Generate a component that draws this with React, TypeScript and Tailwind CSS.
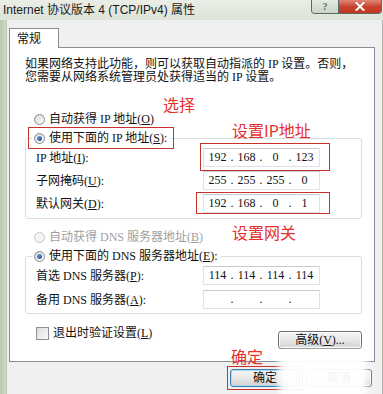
import React from "react";

const uiFont = { fontFamily: '"Liberation Serif", "Noto Sans CJK SC", serif' };

function Radio({ checked, disabled }: { checked?: boolean; disabled?: boolean }) {
  return (
    <span
      className={`relative flex h-[11px] w-[11px] flex-none items-center justify-center rounded-full border ${
        disabled ? "border-[#c4c4c4] bg-[#f4f4f4]" : "border-[#8a8a8a] bg-gradient-to-br from-[#d8d8d8] to-[#ffffff]"
      }`}
    >
      {checked && <span className="h-[5px] w-[5px] rounded-full bg-gradient-to-br from-[#6fa6e0] to-[#1c4f8e]" />}
    </span>
  );
}

function RadioRow({
  checked,
  disabled,
  children,
  boxed,
}: {
  checked?: boolean;
  disabled?: boolean;
  children: React.ReactNode;
  boxed?: boolean;
}) {
  return (
    <div className="relative z-10 flex h-[14px] pl-[22px]">
      <div
        className={`flex items-center gap-[4px] bg-white pl-[2px] pr-[3px] ${disabled ? "text-[#a0a0a0]" : "text-[#111]"} ${
          boxed ? "outline outline-1 outline-[#c8322d] outline-offset-[3px]" : ""
        }`}
      >
        <Radio checked={checked} disabled={disabled} />
        <span className="leading-[14px]">{children}</span>
      </div>
    </div>
  );
}

function IpField({ parts }: { parts: string[] }) {
  return (
    <div className="flex h-[19px] w-[117px] items-center border border-[#dfe3e8] border-t-[#c6cbd2] bg-white pl-[1px] text-[12px] text-[#111]">
      {parts.map((p, i) => (
        <React.Fragment key={i}>
          <span className="w-[25px] text-center leading-[17px]">{p}</span>
          {i < 3 && <span className="w-[4px] text-center leading-[17px]">.</span>}
        </React.Fragment>
      ))}
    </div>
  );
}

function FieldRow({ label, parts }: { label: React.ReactNode; parts: string[] }) {
  return (
    <div className="flex h-[19px] items-center">
      <span className="w-[167px] leading-[14px]">{label}</span>
      <IpField parts={parts} />
    </div>
  );
}

function WinButton({ children, primary }: { children: React.ReactNode; primary?: boolean }) {
  return (
    <div
      className={`flex h-[18px] items-center justify-center rounded-[3px] border bg-gradient-to-b from-[#f4f4f4] via-[#e8e8e8] to-[#d2d2d2] text-[12px] text-[#111] ${
        primary ? "border-[#3c7fb1] shadow-[inset_0_0_0_1px_#a8dcf4]" : "border-[#707070] shadow-[inset_0_0_0_1px_#fcfcfc]"
      }`}
    >
      {children}
    </div>
  );
}

export default function App() {
  return (
    <div className="relative h-[394px] w-[383px] overflow-hidden bg-[#dfe7da]" style={uiFont}>
      {/* title bar */}
      <div className="flex h-[20px] items-start bg-gradient-to-b from-[#eaeee6] to-[#dde4d8]">
        <span
          className="pl-[3px] pt-[2px] text-[12px] leading-[16px] text-[#1a1a1a]"
          style={{ fontFamily: '"Liberation Sans", "Noto Sans CJK SC", sans-serif' }}
        >
          Internet 协议版本 4 (TCP/IPv4) 属性
        </span>
        <div className="ml-auto mr-[1px] flex h-[14px] overflow-hidden rounded-b-[4px] border border-t-0 border-[#5c6a63]">
          <div className="flex w-[26px] items-center justify-center bg-gradient-to-b from-[#e4ebe2] to-[#c9d6c6] text-[10px] font-bold leading-none text-[#5a6b66]">
            ?
          </div>
          <div className="flex w-[43px] items-center justify-center border-l border-[#5c6a63] bg-gradient-to-b from-[#e0867a] via-[#c8432f] to-[#c2371f]">
            <svg width="10" height="9" viewBox="0 0 10 9">
              <path d="M1.5 1 L8.5 8 M8.5 1 L1.5 8" stroke="#fff" strokeWidth="2" strokeLinecap="square" />
            </svg>
          </div>
        </div>
      </div>

      {/* body */}
      <div className="flex h-[374px]">
        <div className="w-[7px] flex-none border-r border-[#b9c6b2] bg-gradient-to-r from-[#b7c8ad] to-[#cfdac9]" />
        <div className="flex-1 bg-[#f0f0f0] pl-[2px] pt-[8px] text-[12px] text-[#111]">
          {/* tab */}
          <div className="relative z-10 -mb-px flex h-[20px] w-[50px] items-center border border-b-0 border-[#898c95] bg-white pl-[7px]">
            常规
          </div>
          {/* panel */}
          <div className="h-[315px] w-[366px] border border-[#898c95] bg-white">
            <div className="pl-[15px] pt-[10px] leading-[13px]">
              <div>如果网络支持此功能，则可以获取自动指派的 IP 设置。否则，</div>
              <div>您需要从网络系统管理员处获得适当的 IP 设置。</div>
            </div>

            <div className="mt-[28px]">
              <RadioRow>
                自动获得 IP 地址(<u>O</u>)
              </RadioRow>
            </div>
            <div className="mt-[5px]">
              <RadioRow checked boxed>
                使用下面的 IP 地址(<u>S</u>):
              </RadioRow>
            </div>
            <div className="-mt-[7px] ml-[15px] flex h-[81px] w-[337px] flex-col gap-[4px] rounded-[3px] border border-[#d5dfe5] pl-[10px] pt-[9px]">
              <FieldRow label={<>IP 地址(<u>I</u>):</>} parts={["192", "168", "0", "123"]} />
              <FieldRow label={<>子网掩码(<u>U</u>):</>} parts={["255", "255", "255", "0"]} />
              <FieldRow label={<>默认网关(<u>D</u>):</>} parts={["192", "168", "0", "1"]} />
            </div>

            <div className="mt-[11px]">
              <RadioRow disabled>
                自动获得 DNS 服务器地址(<u>B</u>)
              </RadioRow>
            </div>
            <div className="mt-[5px]">
              <RadioRow checked>
                使用下面的 DNS 服务器地址(<u>E</u>):
              </RadioRow>
            </div>
            <div className="-mt-[7px] ml-[15px] flex h-[58px] w-[337px] flex-col gap-[5px] rounded-[3px] border border-[#d5dfe5] pl-[10px] pt-[9px]">
              <FieldRow label={<>首选 DNS 服务器(<u>P</u>):</>} parts={["114", "114", "114", "114"]} />
              <FieldRow label={<>备用 DNS 服务器(<u>A</u>):</>} parts={["", "", "", ""]} />
            </div>

            <div className="mt-[12px] flex items-start pl-[26px] pr-[12px]">
              <div className="flex items-center gap-[4px]">
                <span className="h-[13px] w-[13px] border border-[#8f8f8f] bg-gradient-to-br from-[#dcdcdc] to-[#fbfbfb]" />
                <span className="leading-[14px]">
                  退出时验证设置(<u>L</u>)
                </span>
              </div>
              <div className="ml-auto mt-[5px] w-[84px]">
                <WinButton>
                  高级(<u>V</u>)...
                </WinButton>
              </div>
            </div>
          </div>

          {/* bottom buttons */}
          <div className="flex gap-[6px] pl-[221px] pt-[7px]">
            <div className="w-[70px] outline outline-1 outline-[#c8322d] outline-offset-[2px]">
              <WinButton primary>确定</WinButton>
            </div>
            <div className="w-[66px]">
              <WinButton>取消</WinButton>
            </div>
          </div>
        </div>
        <div className="w-[1px] flex-none bg-[#aab5a5]" />
      </div>

      {/* red annotations */}
      <div
        className="absolute inset-0 text-[16px] leading-[18px] text-[#e5312b]"
        style={{ fontFamily: '"Noto Sans CJK SC", sans-serif' }}
      >
        <span className="absolute left-[163px] top-[95px]">选择</span>
        <span className="absolute left-[232px] top-[121px]">设置IP地址</span>
        <span className="absolute left-[232px] top-[223px]">设置网关</span>
        <span className="absolute left-[231px] top-[347px]">确定</span>
        <div className="absolute left-[200px] top-[143px] h-[28px] w-[130px] border border-[#c8322d]" />
        <div className="absolute left-[196px] top-[192px] h-[22px] w-[134px] border border-[#c8322d]" />
      </div>

      {/* blurred watermark patch */}
      <div className="absolute left-[279px] top-[350px] h-[50px] w-[88px] rounded-[6px] bg-white/95 blur-[3px]" />
    </div>
  );
}
